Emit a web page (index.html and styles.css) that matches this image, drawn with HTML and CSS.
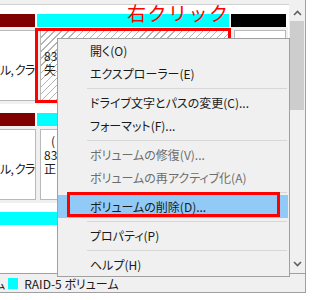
FILE: index.html
```html
<!DOCTYPE html>
<html lang="ja">
<head>
<meta charset="utf-8">
<link rel="stylesheet" href="styles.css">
</head>
<body>
<div class="frame">
  <div class="disks">
    <div class="topstrip"></div>
    <div class="disk">
      <div class="vol vol-left">
        <div class="bar bar-red"></div>
        <div class="body"><div class="inner"><p>&nbsp;</p><p>&nbsp;</p><p class="tight">ル, クラ</p></div></div>
      </div>
      <div class="vol vol-main">
        <div class="bar bar-cyan"></div>
        <div class="body"><div class="inner hatched"><p>&nbsp;</p><p><span>83</span></p><p><span>失</span></p></div></div>
      </div>
      <div class="vol vol-small">
        <div class="bar bar-black"></div>
        <div class="body"><div class="inner"></div></div>
      </div>
    </div>
    <div class="disk">
      <div class="vol vol-left">
        <div class="bar bar-red"></div>
        <div class="body"><div class="inner"><p>&nbsp;</p><p>&nbsp;</p><p class="tight">ル, クラ</p></div></div>
      </div>
      <div class="vol vol-main">
        <div class="bar bar-cyan"></div>
        <div class="body"><div class="inner"><p class="indent"><span>(</span></p><p><span>83</span></p><p><span>正</span></p></div></div>
      </div>
      <div class="vol vol-small">
        <div class="bar bar-black"></div>
        <div class="body"><div class="inner"></div></div>
      </div>
    </div>
    <div class="disk">
      <div class="vol vol-wide">
        <div class="bar bar-cyan"></div>
        <div class="body body-white"></div>
      </div>
    </div>
  </div>
  <div class="scrollbar">
    <div class="sb-btn sb-up"><svg width="9" height="6" viewBox="0 0 9 6"><path d="M1 5 L4.5 1.5 L8 5" fill="none" stroke="#606060" stroke-width="1.6"/></svg></div>
    <div class="sb-thumb"></div>
    <div class="sb-space"></div>
    <div class="sb-btn sb-down"><svg width="9" height="6" viewBox="0 0 9 6"><path d="M1 1 L4.5 4.5 L8 1" fill="none" stroke="#606060" stroke-width="1.6"/></svg></div>
  </div>
  <div class="legend">
    <span class="cut">ム</span>
    <span class="swatch"></span>
    <span class="legend-text">RAID-5 ボリューム</span>
  </div>
</div>

<div class="label">右クリック</div>
<div class="mark mark-volume"></div>

<div class="menu">
  <div class="mi">開く(O)</div>
  <div class="mi">エクスプローラー(E)</div>
  <div class="sep"></div>
  <div class="mi">ドライブ文字とパスの変更(C)...</div>
  <div class="mi">フォーマット(F)...</div>
  <div class="sep"></div>
  <div class="mi dis">ボリュームの修復(V)...</div>
  <div class="mi dis">ボリュームの再アクティブ化(A)</div>
  <div class="sep"></div>
  <div class="mi hl">ボリュームの削除(D)...</div>
  <div class="sep"></div>
  <div class="mi">プロパティ(P)</div>
  <div class="sep"></div>
  <div class="mi">ヘルプ(H)</div>
</div>

<div class="mark mark-item"></div>
</body>
</html>
```

FILE: styles.css
```css
* { box-sizing: border-box; }
html, body { margin: 0; padding: 0; }
body {
  width: 313px;
  height: 300px;
  overflow: hidden;
  position: relative;
  background: #fff;
  font-family: "Noto Sans CJK JP", "Noto Sans", sans-serif;
  font-size: 12px;
  font-feature-settings: "palt";
  color: #1a1a1a;
}
p { margin: 0; }

.frame {
  width: 306px;
  height: 293px;
  border-right: 1px solid #a0a0a0;
  border-bottom: 1px solid #a0a0a0;
  display: grid;
  grid-template-columns: 289px 16px;
  grid-template-rows: 273px 19px;
}

.disks { overflow: hidden; background: #fff; }
.topstrip {
  height: 5px;
  background: #f0f0f0;
  border-bottom: 1px solid #d0d0d0;
  margin-bottom: 9px;
}
.disk { display: flex; height: 90px; margin-bottom: 9px; }
.vol { display: flex; flex-direction: column; flex: none; }
.vol-left { width: 37px; }
.vol-main { width: 194px; }
.vol-small { width: 57px; }
.vol-wide { width: 289px; }

.bar { height: 13px; margin-right: 2px; flex: none; }
.bar-red { background: #800000; }
.bar-cyan { background: #00ffff; }
.bar-black { background: #000; }

.body {
  flex: 1;
  background: #f0f0f0;
  padding: 3px 2px 3px 3px;
}
.vol-left .body { padding: 3px 1px 3px 0; }
.body-white { background: #fff; }

.inner {
  height: 100%;
  background: #fff;
  border: 1px solid #b9b9b9;
  padding: 4px 0 0 3px;
  line-height: 14px;
  white-space: nowrap;
  overflow: hidden;
}
.vol-left .inner { border-left: none; padding-left: 0; }
.tight { letter-spacing: -0.8px; }
.hatched {
  background: repeating-linear-gradient(135deg, #fff 0 4px, #b4b4b4 4px 5px);
}
.indent { padding-left: 7px; }

.scrollbar {
  background: #f0f0f0;
  display: flex;
  flex-direction: column;
  align-items: center;
}
.sb-btn {
  width: 16px;
  height: 21px;
  display: flex;
  justify-content: center;
  flex: none;
}
.sb-up { align-items: flex-start; padding-top: 10px; }
.sb-down { align-items: flex-end; padding-bottom: 6px; }
.sb-thumb { width: 14px; height: 89px; background: #cdcdcd; flex: none; }
.sb-space { flex: 1; }

.legend {
  grid-column: 1 / 3;
  background: #f0f0f0;
  border-top: 1px solid #a0a0a0;
  display: flex;
  align-items: center;
  white-space: nowrap;
  overflow: hidden;
  color: #1a1a1a;
}
.cut { margin-left: -6px; }
.swatch {
  width: 10px;
  height: 11px;
  background: #00ffff;
  margin-left: 3px;
  flex: none;
}
.legend-text { margin-left: 6px; }

.label {
  position: absolute;
  left: 127px;
  top: 0;
  font-size: 19px;
  line-height: 26px;
  letter-spacing: 1.5px;
  color: #ff0000;
  font-feature-settings: normal;
}

.mark {
  position: absolute;
  border: 3px solid #ff0000;
}
.mark-volume { left: 35px; top: 28px; width: 196px; height: 75px; }
.mark-item { left: 67px; top: 192px; width: 213px; height: 25px; }

.menu {
  position: absolute;
  left: 57px;
  top: 38px;
  width: 233px;
  background: #f0f0f0;
  border: 1px solid #a0a0a0;
}
.mi {
  height: 23px;
  line-height: 23px;
  padding-left: 32px;
  margin-right: 1px;
  white-space: nowrap;
}
.mi.dis { color: #6d6d6d; }
.mi.hl { background: #91c9f7; }
.sep {
  height: 6px;
  padding-top: 3px;
  margin: 0 2px 0 29px;
}
.sep::after {
  content: "";
  display: block;
  height: 1px;
  background: #d7d7d7;
}
```
